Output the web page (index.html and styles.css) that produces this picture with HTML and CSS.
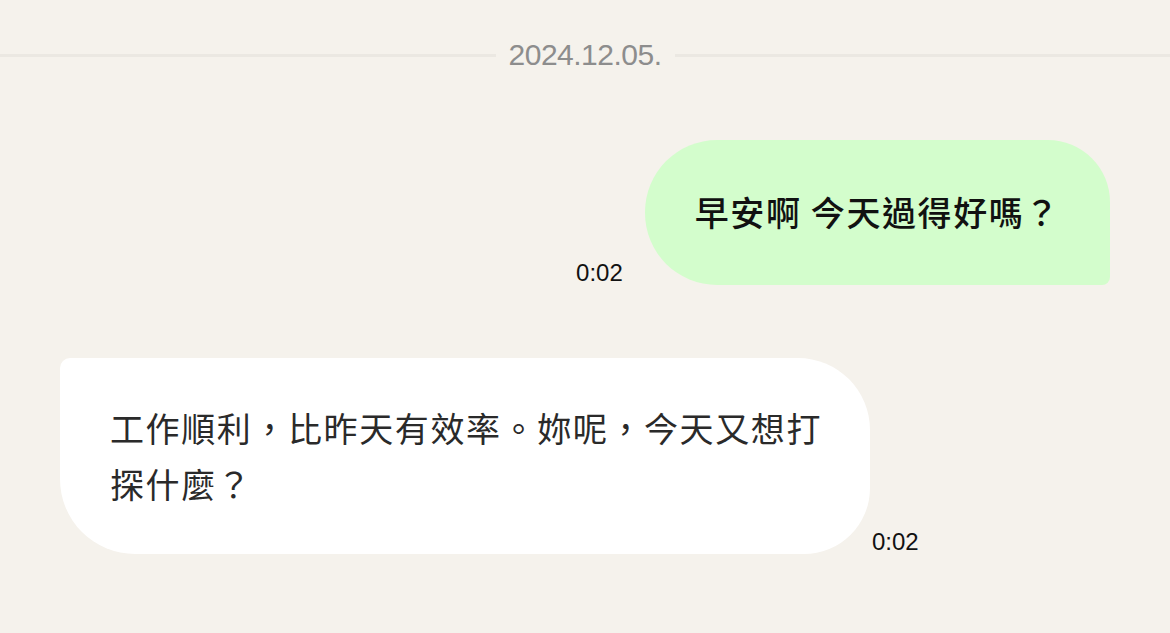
FILE: index.html
```html
<!DOCTYPE html>
<html lang="zh-Hant">
<head>
  <meta charset="UTF-8" />
  <meta name="viewport" content="width=device-width, initial-scale=1.0"/>
  <title>聊天</title>
  <link rel="stylesheet" href="styles.css">
</head>
<body>
  <div class="chat">
    <div class="fecha">
      <span class="linea"></span>
      <span class="fecha-texto">2024.12.05.</span>
      <span class="linea"></span>
    </div>

    <div class="msg msg-yo">
      <span class="hora">0:02</span>
      <div class="burbuja burbuja-yo">早安啊 今天過得好嗎？</div>
    </div>

    <div class="msg msg-otro">
      <div class="burbuja burbuja-otro">工作順利，比昨天有效率。妳呢，今天又想打探什麼？</div>
      <span class="hora">0:02</span>
    </div>
  </div>
</body>
</html>
```

FILE: styles.css
```css
body {
  margin: 0;
  background-color: #f5f2ec;
  font-family: "Liberation Sans", "Noto Sans CJK SC", sans-serif;
  color: #111;
}
.chat {
  padding: 38px 60px 0 60px;
}
.fecha {
  display: flex;
  align-items: center;
  gap: 13px;
  margin: 0 -60px;
  height: 34px;
}
.linea {
  flex: 1;
  height: 3px;
  background-color: #ebe8e2;
}
.fecha-texto {
  font-size: 30px;
  line-height: 34px;
  color: #8d8d8d;
  letter-spacing: -0.5px;
}
.msg {
  display: flex;
  align-items: flex-end;
}
.msg-yo {
  justify-content: flex-end;
  gap: 22px;
  margin-top: 68px;
}
.msg-otro {
  gap: 2px;
  margin-top: 73px;
}
.burbuja {
  font-family: "Noto Sans CJK SC", sans-serif;
  font-size: 34px;
  line-height: 56px;
  font-weight: 500;
  letter-spacing: 1.6px;
  padding: 44px 50px 45px 50px;
}
.burbuja-yo {
  background-color: #d3fdcc;
  color: #111;
  border-radius: 72px 62px 8px 72px;
}
.burbuja-otro {
  background-color: #fff;
  color: #2a2a2a;
  font-weight: 400;
  max-width: 712px;
  padding: 42px 48px 42px 50px;
  border-radius: 10px 72px 66px 75px;
}
.hora {
  font-size: 24px;
  line-height: 24px;
  color: #111;
  margin-bottom: 0;
}
```
